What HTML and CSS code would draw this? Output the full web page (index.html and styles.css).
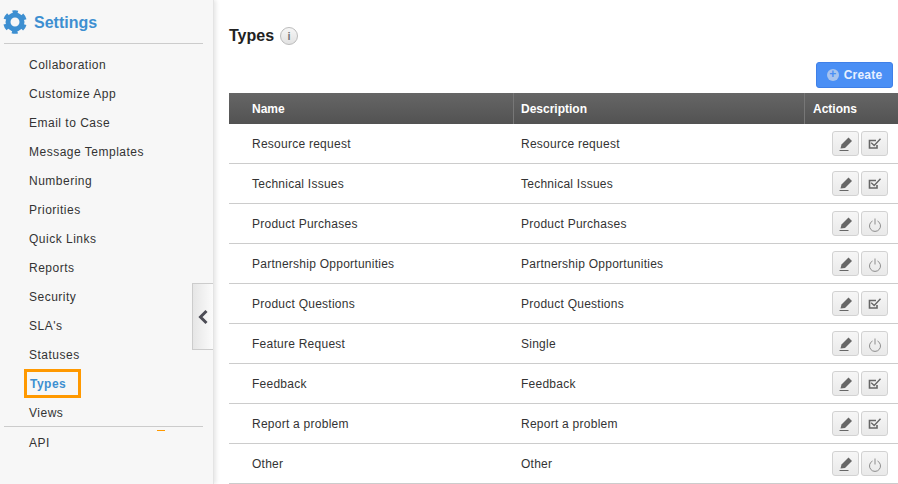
FILE: index.html
```
<!DOCTYPE html>
<html lang="en">
<head>
<meta charset="utf-8">
<title>Types</title>
<link rel="stylesheet" href="styles.css">
</head>
<body>
<svg class="defs" width="0" height="0" aria-hidden="true">
  <symbol id="i-edit" viewBox="0 0 16 16">
    <path d="M2.5 12.5 3.5 8.5 10.5 1.5l3.5 3.5L7 12z" fill="#666"/>
    <path d="M1.5 14.5h9" stroke="#666" stroke-width="1"/>
  </symbol>
  <symbol id="i-check" viewBox="0 0 16 16">
    <path d="M9 4.5H2.5V12H10V9" fill="none" stroke="#666" stroke-width="1.6"/>
    <path d="M4.2 6.8l3 2.7 6.3-6.7" fill="none" stroke="#666" stroke-width="1.4"/>
  </symbol>
  <symbol id="i-power" viewBox="0 0 16 16" overflow="visible">
    <path d="M5.5 5a5.5 5.5 0 1 0 5 0" fill="none" stroke="#8c8c8c" stroke-width="1"/>
    <path d="M8 2.5v6" fill="none" stroke="#8c8c8c" stroke-width="1"/>
  </symbol>
</svg>
<div class="app">
  <aside class="sidebar">
    <div class="side-head">
      <svg class="gear" viewBox="0 0 24 24" width="24" height="24"><circle cx="12" cy="12" r="7" fill="none" stroke="#3d8fd1" stroke-width="5"/><circle cx="12" cy="12" r="10" fill="none" stroke="#3d8fd1" stroke-width="3.6" stroke-dasharray="5.6 4.87" stroke-dashoffset="2.8" transform="rotate(-90 12 12)"/></svg>
      <span class="side-title">Settings</span>
    </div>
    <nav class="side-nav">
      <a class="nav-item">Collaboration</a>
      <a class="nav-item">Customize App</a>
      <a class="nav-item">Email to Case</a>
      <a class="nav-item">Message Templates</a>
      <a class="nav-item">Numbering</a>
      <a class="nav-item">Priorities</a>
      <a class="nav-item">Quick Links</a>
      <a class="nav-item">Reports</a>
      <a class="nav-item">Security</a>
      <a class="nav-item">SLA's</a>
      <a class="nav-item">Statuses</a>
      <a class="nav-item active">Types</a>
      <a class="nav-item">Views</a>
    </nav>
    <div class="nav-last">
      <a class="nav-item">API</a>
      <span class="orange-tick"></span>
    </div>
    <button class="collapse" aria-label="Collapse">
      <svg viewBox="0 0 12 16" width="12" height="16"><path d="M9.5 2 3.5 8l6 6" fill="none" stroke="#4c4c55" stroke-width="3"/></svg>
    </button>
  </aside>
  <main class="main">
    <div class="title-row">
      <h1 class="title">Types</h1>
      <span class="info">i</span>
    </div>
    <div class="toolbar">
      <button class="create"><span class="plus">+</span>Create</button>
    </div>
    <div class="table">
      <div class="thead">
        <div class="cell c-name">Name</div>
        <div class="cell c-desc">Description</div>
        <div class="cell c-act">Actions</div>
      </div>
      <div class="row"><div class="c-name">Resource request</div><div class="c-desc">Resource request</div><div class="c-act"><span class="ib"><svg><use href="#i-edit"/></svg></span><span class="ib"><svg><use href="#i-check"/></svg></span></div></div>
      <div class="row"><div class="c-name">Technical Issues</div><div class="c-desc">Technical Issues</div><div class="c-act"><span class="ib"><svg><use href="#i-edit"/></svg></span><span class="ib"><svg><use href="#i-check"/></svg></span></div></div>
      <div class="row"><div class="c-name">Product Purchases</div><div class="c-desc">Product Purchases</div><div class="c-act"><span class="ib"><svg><use href="#i-edit"/></svg></span><span class="ib"><svg><use href="#i-power"/></svg></span></div></div>
      <div class="row"><div class="c-name">Partnership Opportunities</div><div class="c-desc">Partnership Opportunities</div><div class="c-act"><span class="ib"><svg><use href="#i-edit"/></svg></span><span class="ib"><svg><use href="#i-power"/></svg></span></div></div>
      <div class="row"><div class="c-name">Product Questions</div><div class="c-desc">Product Questions</div><div class="c-act"><span class="ib"><svg><use href="#i-edit"/></svg></span><span class="ib"><svg><use href="#i-check"/></svg></span></div></div>
      <div class="row"><div class="c-name">Feature Request</div><div class="c-desc">Single</div><div class="c-act"><span class="ib"><svg><use href="#i-edit"/></svg></span><span class="ib"><svg><use href="#i-power"/></svg></span></div></div>
      <div class="row"><div class="c-name">Feedback</div><div class="c-desc">Feedback</div><div class="c-act"><span class="ib"><svg><use href="#i-edit"/></svg></span><span class="ib"><svg><use href="#i-check"/></svg></span></div></div>
      <div class="row"><div class="c-name">Report a problem</div><div class="c-desc">Report a problem</div><div class="c-act"><span class="ib"><svg><use href="#i-edit"/></svg></span><span class="ib"><svg><use href="#i-check"/></svg></span></div></div>
      <div class="row"><div class="c-name">Other</div><div class="c-desc">Other</div><div class="c-act"><span class="ib"><svg><use href="#i-edit"/></svg></span><span class="ib"><svg><use href="#i-power"/></svg></span></div></div>
    </div>
  </main>
</div>
</body>
</html>
```
FILE: styles.css
```
* { box-sizing: border-box; }
html, body { margin: 0; height: 100%; overflow: hidden; }
body { font-family: "Liberation Sans", Arial, sans-serif; font-size: 12px; color: #333; background: #fff; }
.defs { position: absolute; }
.app { display: flex; height: 484px; }

.sidebar { position: relative; width: 214px; flex: none; background: #f7f7f7; border-right: 1px solid #e4e4e4; box-shadow: 2px 0 4px rgba(0,0,0,.1); padding: 0 10px 0 4px; }
.side-head { height: 44px; border-bottom: 1px solid #ccc; display: flex; align-items: center; gap: 7px; padding-top: 1px; }
.gear { flex: none; margin: -1px 0 0 -1px; }
.side-title { font-size: 16px; font-weight: bold; color: #3d8fd1; margin-top: 1px; }
.side-nav { display: flex; flex-direction: column; padding-top: 6px; }
.nav-item { display: flex; align-items: center; height: 29px; padding-left: 25px; letter-spacing: .5px; color: #333; line-height: 14px; }
.nav-item.active { position: relative; font-weight: bold; color: #3d8fd1; padding-left: 26px; }
.nav-item.active::after { content: ""; box-sizing: border-box; position: absolute; left: 20px; top: 0; width: 57px; height: 29px; border: 3px solid #f90; }
.nav-last { position: relative; margin-top: -1px; border-top: 1px solid #ccc; padding-top: 1px; }
.nav-last .nav-item { height: 29px; }
.orange-tick { position: absolute; left: 153px; top: 3px; width: 8px; height: 1px; background: #f90; }
.collapse { position: absolute; right: 0; top: 283px; width: 21px; height: 67px; padding: 0; display: flex; align-items: center; justify-content: center; background: linear-gradient(90deg, #e6e6e6, #fbfbfb); border: 1px solid #ccc; border-right: 0; }

.main { flex: 1; min-width: 0; padding-left: 15px; background: #fff; }
.title-row { display: flex; align-items: center; gap: 6px; height: 60px; padding-top: 11px; }
.title { margin: 0; font-size: 16px; font-weight: bold; color: #222; }
.info { width: 18px; height: 18px; border-radius: 50%; border: 1px solid #bbb; background: linear-gradient(#f6f6f6, #e2e2e2); color: #777; display: flex; align-items: center; justify-content: center; font: bold 11px "Liberation Sans", sans-serif; }
.toolbar { display: flex; justify-content: flex-end; height: 33px; padding: 2px 5px 0 0; }
.create { width: 77px; height: 26px; padding: 0; border: 1px solid #3f80e8; border-radius: 3px; background: #4a8ff5; font: bold 12px "Liberation Sans", sans-serif; letter-spacing: .2px; display: flex; align-items: center; justify-content: center; gap: 5px; color: #e8f0ff; }
.plus { width: 12px; height: 12px; border-radius: 50%; background: #a8c4ee; color: #4a8ff5; font-size: 12px; line-height: 11px; display: block; text-align: center; letter-spacing: 0; }

.table { width: 669px; }
.thead { display: flex; height: 31px; background: linear-gradient(#666, #525252); color: #fff; font-weight: bold; }
.cell { display: flex; align-items: center; }
.c-name { width: 284px; flex: none; padding-left: 23px; }
.c-desc { width: 291px; flex: none; padding-left: 7px; }
.c-act { flex: 1; }
.thead .c-desc, .thead .c-act { border-left: 1px solid #777; }
.thead .c-act { padding-left: 8px; }
.row { display: flex; align-items: center; height: 40px; border-bottom: 1px solid #ccc; letter-spacing: .25px; color: #333; }
.row .c-desc { padding-left: 8px; }
.row .c-act { display: flex; justify-content: flex-end; gap: 2px; padding-right: 10px; }
.ib { width: 27px; height: 25px; border: 1px solid #d2d2d2; border-radius: 3px; background: linear-gradient(#f6f6f6, #e9e9e9); display: flex; align-items: center; justify-content: center; }
.ib svg { width: 16px; height: 16px; display: block; overflow: visible; }
```
